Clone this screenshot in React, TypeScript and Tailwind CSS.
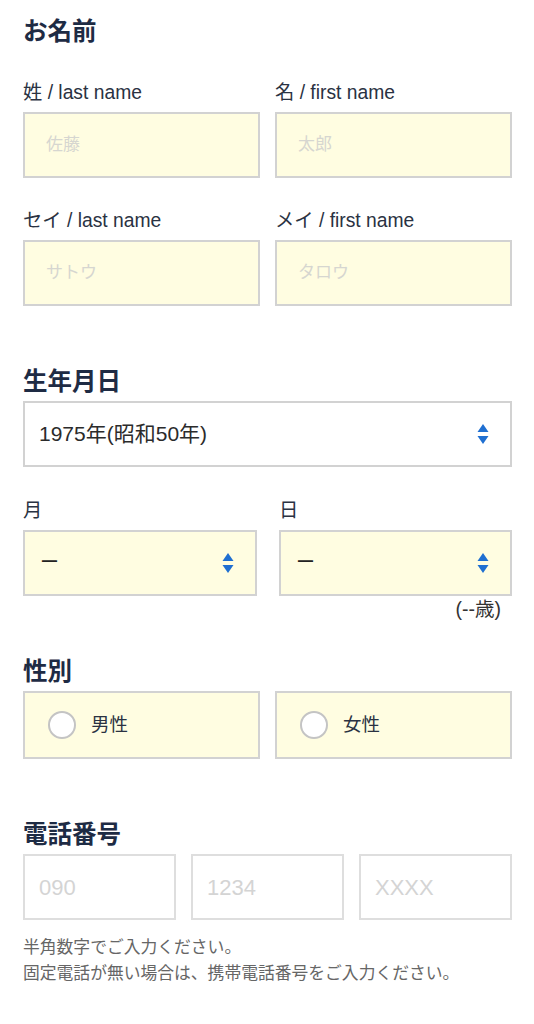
import React from 'react';

const font = { fontFamily: '"Liberation Sans", "Noto Sans CJK JP", sans-serif' };

function SelectArrows() {
  return (
    <svg width="12" height="22" viewBox="0 0 12 22" className="shrink-0">
      <path d="M6 1 L11.5 9 L0.5 9 Z" fill="#1f6fd1" />
      <path d="M0.5 13 L11.5 13 L6 21 Z" fill="#1f6fd1" />
    </svg>
  );
}

function Heading({ children, className = '' }: { children: React.ReactNode; className?: string }) {
  return (
    <h2 className={`text-[24.5px] leading-[28px] font-bold text-[#1e2b44] ${className}`}>{children}</h2>
  );
}

function Label({ children }: { children: React.ReactNode }) {
  return <div className="text-[19.3px] leading-[24px] text-[#2a3242] mb-[7px]">{children}</div>;
}

function TextBox({ placeholder }: { placeholder: string }) {
  return (
    <div className="h-[66px] bg-[#fffde1] border-2 border-[#d2d2d2] flex items-center pl-[21px] text-[17px] text-[#d6d6d0]">
      {placeholder}
    </div>
  );
}

export default function App() {
  return (
    <div className="min-h-[1024px] bg-white pl-[23px] pr-[22px] pt-[18px] w-[534px]" style={font}>
      <Heading>お名前</Heading>

      <div className="grid grid-cols-2 gap-x-[15px] mt-[35px]">
        <div>
          <Label>姓 / last name</Label>
          <TextBox placeholder="佐藤" />
        </div>
        <div>
          <Label>名 / first name</Label>
          <TextBox placeholder="太郎" />
        </div>
      </div>

      <div className="grid grid-cols-2 gap-x-[15px] mt-[31px]">
        <div>
          <Label>セイ / last name</Label>
          <TextBox placeholder="サトウ" />
        </div>
        <div>
          <Label>メイ / first name</Label>
          <TextBox placeholder="タロウ" />
        </div>
      </div>

      <Heading className="mt-[62px]">生年月日</Heading>
      <div className="mt-[5px] h-[66px] border-2 border-[#d2d2d2] bg-white flex items-center justify-between pl-[14px] pr-[21px] text-[21px] text-[#2b2b2b]">
        <span>1975年(昭和50年)</span>
        <SelectArrows />
      </div>

      <div className="flex gap-x-[22px] mt-[32px]">
        <div className="w-[234px]">
          <Label>月</Label>
          <div className="h-[66px] bg-[#fffde1] border-2 border-[#d2d2d2] flex items-center justify-between pl-[15px] pr-[21px] text-[19px] text-[#222]">
            <span>ー</span>
            <SelectArrows />
          </div>
        </div>
        <div className="flex-1">
          <Label>日</Label>
          <div className="h-[66px] bg-[#fffde1] border-2 border-[#d2d2d2] flex items-center justify-between pl-[15px] pr-[21px] text-[19px] text-[#222]">
            <span>ー</span>
            <SelectArrows />
          </div>
        </div>
      </div>
      <div className="text-right pr-[11px] text-[19.5px] leading-[24px] text-[#333] mt-[1px]">(--歳)</div>

      <Heading className="mt-[37px]">性別</Heading>
      <div className="grid grid-cols-2 gap-x-[15px] mt-[5px]">
        {['男性', '女性'].map((g) => (
          <div
            key={g}
            className="h-[68px] bg-[#fffde1] border-2 border-[#d2d2d2] flex items-center pl-[23px] gap-x-[15px]"
          >
            <span className="w-[28px] h-[28px] rounded-full border-2 border-[#c4c4c4] bg-white" />
            <span className="text-[18.5px] text-[#2a3242]">{g}</span>
          </div>
        ))}
      </div>

      <Heading className="mt-[62px]">電話番号</Heading>
      <div className="grid grid-cols-3 gap-x-[15px] mt-[5px]">
        {['090', '1234', 'XXXX'].map((p) => (
          <div
            key={p}
            className="h-[66px] bg-white border-2 border-[#dedede] flex items-center pl-[14px] text-[22px] text-[#d4d4d4]"
          >
            {p}
          </div>
        ))}
      </div>

      <div className="mt-[15px] text-[16.8px] leading-[26px] text-[#666]">
        <p>半角数字でご入力ください。</p>
        <p>固定電話が無い場合は、携帯電話番号をご入力ください。</p>
      </div>
    </div>
  );
}
